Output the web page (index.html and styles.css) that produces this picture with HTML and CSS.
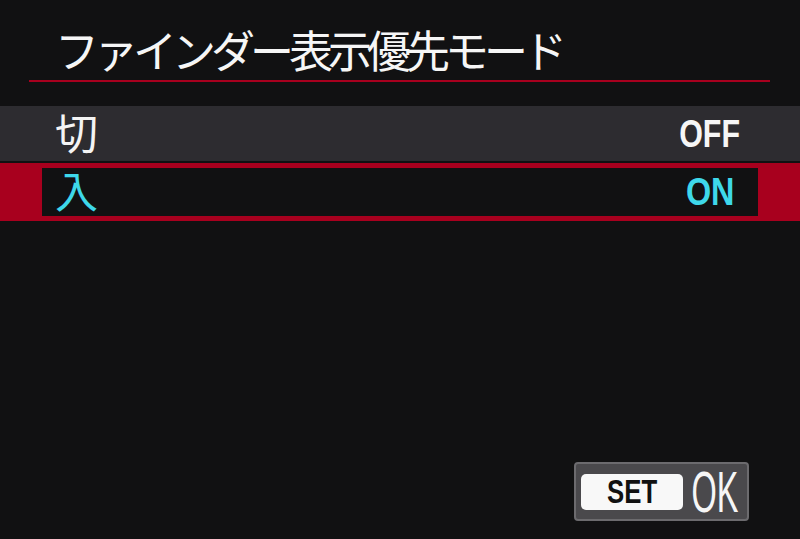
FILE: index.html
```html
<!DOCTYPE html>
<html lang="ja">
<head>
<meta charset="utf-8">
<link rel="stylesheet" href="styles.css">
</head>
<body>
<div class="screen">
  <header class="header">
    <h1 class="title">ファインダー表示優先モード</h1>
  </header>
  <ul class="options">
    <li class="option">
      <span class="label">切</span>
      <span class="value">OFF</span>
    </li>
    <li class="option selected">
      <div class="option-inner">
        <span class="label">入</span>
        <span class="value value-on">ON</span>
      </div>
    </li>
  </ul>
  <footer class="footer">
    <div class="set-ok">
      <span class="set-key"><span class="set-text">SET</span></span>
      <span class="ok-box"><span class="ok-text">OK</span></span>
    </div>
  </footer>
</div>
</body>
</html>
```

FILE: styles.css
```css
html, body {
  margin: 0;
  padding: 0;
  background: #111112;
}

.screen {
  width: 800px;
  height: 539px;
  display: flex;
  flex-direction: column;
  background: #111112;
  color: #f4f4f4;
  font-family: "Noto Sans CJK JP", "Noto Sans", sans-serif;
}

.header {
  margin: 0 30px 0 29px;
  padding-top: 25px;
  border-bottom: 2px solid #a8001e;
}

.title {
  margin: 0;
  padding: 0 0 6px 26px;
  font-size: 44px;
  line-height: 49px;
  font-weight: 400;
  letter-spacing: -5px;
  color: #f6f6f6;
}

.options {
  list-style: none;
  margin: 24px 0 0 0;
  padding: 0;
  display: flex;
  flex-direction: column;
  gap: 2px;
}

.option {
  height: 55px;
  display: flex;
  align-items: center;
  justify-content: space-between;
  padding: 0 60px 0 55px;
  background: #2d2c30;
}

.option.selected {
  height: 58px;
  padding: 5px 42px 5px 42px;
  box-sizing: border-box;
  background: #a8001e;
  display: block;
}

.option-inner {
  height: 48px;
  display: flex;
  align-items: center;
  justify-content: space-between;
  padding: 0 24px 0 13px;
  background: #111112;
}

.label {
  font-size: 43px;
  line-height: 48px;
  padding-bottom: 6px;
  color: #f4f4f4;
}

.value {
  display: inline-block;
  font-family: "Liberation Sans", sans-serif;
  font-weight: 700;
  font-size: 39px;
  line-height: 48px;
  color: #f6f6f6;
  transform: scaleX(0.78);
  transform-origin: right center;
}

.value-on {
  transform: scaleX(0.83);
}

.selected .label,
.selected .value {
  color: #3ed8ea;
}

.footer {
  margin-top: auto;
  display: flex;
  justify-content: flex-end;
  padding: 0 51px 18px 0;
}

.set-ok {
  width: 175px;
  height: 59px;
  box-sizing: border-box;
  border: 2px solid #6c6b6e;
  border-radius: 4px;
  background: #4a494c;
  display: flex;
  align-items: center;
  padding: 0 0 0 5px;
}

.set-key {
  flex-shrink: 0;
  width: 102px;
  height: 36px;
  background: #f8f8f8;
  border-radius: 5px;
  display: flex;
  align-items: center;
  justify-content: center;
}

.set-text {
  display: inline-block;
  font-family: "Liberation Sans", sans-serif;
  font-weight: 700;
  font-size: 33px;
  line-height: 36px;
  color: #111;
  transform: scaleX(0.78);
}

.ok-box {
  flex: 1;
  display: flex;
  justify-content: center;
}

.ok-text {
  display: inline-block;
  font-family: "Liberation Sans", sans-serif;
  font-weight: 400;
  font-size: 58px;
  line-height: 56px;
  color: #f6f6f6;
  margin: 0 -19px;
  transform: scaleX(0.56);
}
```
